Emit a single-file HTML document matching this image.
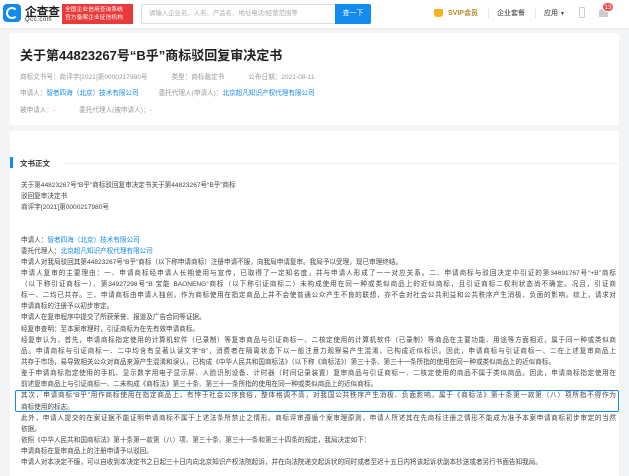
<!DOCTYPE html>
<html><head><meta charset="utf-8"><style>
*{margin:0;padding:0;box-sizing:border-box}
body{width:629px;height:470px;overflow:hidden;background:#f3f4f6;font-family:"Liberation Sans","Noto Sans CJK SC",sans-serif;position:relative;color:#333}
.hd{position:absolute;left:0;top:0;width:629px;height:28px;background:#fff;box-shadow:0 1px 3px rgba(0,0,0,.06)}
.abs{position:absolute}
.card{position:absolute;background:#fff;left:10px;width:609px}
.meta{position:absolute;left:20px;font-size:6.6px;color:#999;white-space:nowrap}
.blue{color:#128bed}
.body{position:absolute;left:21px;width:595px;font-size:6.6px;color:#444;line-height:11.15px}
.l{white-space:nowrap;overflow:hidden;height:11.15px}
.j{text-align:justify;text-align-last:justify;white-space:normal}
</style></head><body>
<div class="hd">
  <div class="abs" style="left:3px;top:4px;width:18px;height:18px;background:#128bed;border-radius:4px"></div>
  <div class="abs" style="left:6px;top:7px;width:12px;height:12px;border:2px solid #fff;border-radius:50%;border-right-color:transparent"></div>
  <div class="abs" style="left:25px;top:3px;font-size:12px;color:#222;font-weight:bold;letter-spacing:-0.5px">企查查</div>
  <div class="abs" style="left:25px;top:17px;font-size:6px;color:#333;letter-spacing:.5px">Qcc.com</div>
  <div class="abs" style="left:62px;top:4px;width:71px;height:20px;background:#e83a3a;color:#fff;font-size:5.8px;line-height:8.5px;padding:1.5px 3px;white-space:nowrap">全国企业信用查询系统<br>官方备案企业征信机构</div>
  <div class="abs" style="left:141px;top:4px;width:195px;height:20px;border:1px solid #ddd;border-radius:2px 0 0 2px;font-size:6.4px;color:#aaa;line-height:18px;padding-left:7px;white-space:nowrap;overflow:hidden">请输入企业名、人名、产品名、地址电话/经营范围等</div>
  <div class="abs" style="left:335px;top:4px;width:36px;height:20px;background:#128bed;color:#fff;font-size:7px;line-height:20px;text-align:center;border-radius:0 2px 2px 0">查一下</div>
  <div class="abs" style="left:434px;top:9px;width:9px;height:8px;background:#f5b324;border-radius:1px 1px 3px 3px"></div>
  <div class="abs" style="left:448px;top:8px;font-size:7px;color:#b8862c;font-weight:bold">SVIP会员</div>
  <div class="abs" style="left:488px;top:9px;width:1px;height:9px;background:#e5e5e5"></div>
  <div class="abs" style="left:497px;top:8px;font-size:7px;color:#333">企业套餐</div>
  <div class="abs" style="left:535px;top:9px;width:1px;height:9px;background:#e5e5e5"></div>
  <div class="abs" style="left:544px;top:8px;font-size:7px;color:#333">应用 <span style="font-size:5px">▼</span></div>
  <div class="abs" style="left:579px;top:7px;width:6px;height:11px;border:1px solid #ccc;border-radius:1.5px"></div>
  <div class="abs" style="left:599px;top:8px;width:9px;height:9px;background:#ccc;border-radius:5px 5px 1px 1px"></div>
  <div class="abs" style="left:602px;top:2px;width:12px;height:10px;background:#f04d4d;border-radius:5px;color:#fff;font-size:6.5px;line-height:10px;text-align:center;border:1px solid #fff">13</div>
</div>

<div class="card" style="top:33px;height:92px"></div>
<div class="abs" style="left:20px;top:45px;font-size:13px;font-weight:bold;color:#222;white-space:nowrap">关于第44823267号“B乎”商标驳回复审决定书</div>
<div class="meta" style="top:71px">商标文书号：商评字[2021]第0000217980号<span style="margin-left:24px">类型：商标裁定书</span><span style="margin-left:24px">公布日期：2021-08-11</span></div>
<div class="meta" style="top:87px">申请人：<span class="blue">智者四海（北京）技术有限公司</span><span style="margin-left:20px">委托代理人(申请人)：</span><span class="blue">北京超凡知识产权代理有限公司</span></div>
<div class="meta" style="top:104px">被申请人：-<span style="margin-left:24px">委托代理人(被申请人)：-</span></div>

<div class="card" style="top:131px;height:345px"></div>
<div class="abs" style="left:10px;top:157px;width:2.5px;height:11px;background:#128bed"></div>
<div class="abs" style="left:20px;top:158px;font-size:7.5px;font-weight:bold;color:#333">文书正文</div>
<div class="abs" style="left:63px;top:163px;width:555px;height:1px;background:#f0f0f0"></div>

<div class="body" style="top:180px">
<div class="l">关于第44823267号“B乎”商标驳回复审决定书关于第44823267号“B乎”商标</div>
<div class="l">驳回复审决定书</div>
<div class="l">商评字[2021]第0000217980号</div>
</div>

<div class="body" style="top:234.5px">
<div class="l">申请人：<span class="blue">智者四海（北京）技术有限公司</span></div>
<div class="l">委托代理人：<span class="blue">北京超凡知识产权代理有限公司</span></div>
<div class="l">申请人对我局驳回其第44823267号“B乎”商标（以下称申请商标）注册申请不服，向我局申请复审。我局予以受理，现已审理终结。</div>
<div class="l j">申请人复审的主要理由：一、申请商标经申请人长期使用与宣传，已取得了一定知名度，并与申请人形成了一一对应关系。二、申请商标与驳回决定中引证的第34691767号“+B”商标</div>
<div class="l j">（以下称引证商标一）、第34927298号“B 宝能 BAONENG”商标（以下称引证商标二）未构成使用在同一种或类似商品上的近似商标，且引证商标二权利状态尚不确定。况且，引证商</div>
<div class="l j">标一、二均已共存。三、申请商标由申请人独创，作为商标使用在指定商品上并不会使普通公众产生不良的联想，亦不会对社会公共利益和公共秩序产生消极、负面的影响。综上，请求对</div>
<div class="l">申请商标的注册予以初步审定。</div>
<div class="l">申请人在复审程序中提交了所获荣誉、报道及广告合同等证据。</div>
<div class="l">经复审查明：至本案审理时，引证商标为在先有效申请商标。</div>
<div class="l j">经复审认为，首先，申请商标指定使用的计算机软件（已录制）等复审商品与引证商标一、二核定使用的计算机软件（已录制）等商品在主要功能、用途等方面相近，属于同一种或类似商</div>
<div class="l j">品。申请商标与引证商标一、二中均含有显著认读文字“B”，消费者在隔离状态下以一般注意力观察易产生混淆，已构成近似标识。因此，申请商标与引证商标一、二在上述复审商品上</div>
<div class="l">共存于市场，易导致相关公众对商品来源产生混淆和误认，已构成《中华人民共和国商标法》（以下称《商标法》）第三十条、第三十一条所指的使用在同一种或类似商品上的近似商标。</div>
<div class="l j">鉴于申请商标指定使用的手机、显示数字用电子显示屏、人脸识别设备、计时器（时间记录装置）复审商品与引证商标一、二核定使用的商品不属于类似商品。因此，申请商标指定使用在</div>
<div class="l">前述复审商品上与引证商标一、二未构成《商标法》第三十条、第三十一条所指的使用在同一种或类似商品上的近似商标。</div>
<div class="l j">其次，申请商标“B乎”用作商标使用在指定商品上，有悖于社会公序良俗，整体格调不高，对我国公共秩序产生消极、负面影响，属于《商标法》第十条第一款第（八）项所指不得作为</div>
<div class="l">商标使用的标志。</div>
<div class="l j">此外，申请人提交的在案证据不能证明申请商标不属于上述法条所禁止之情形。商标评审遵循个案审理原则，申请人所述其在先商标注册之情形不能成为准予本案申请商标初步审定的当然</div>
<div class="l">依据。</div>
<div class="l">依照《中华人民共和国商标法》第十条第一款第（八）项、第三十条、第三十一条和第三十四条的规定，我局决定如下：</div>
<div class="l">申请商标在复审商品上的注册申请予以驳回。</div>
<div class="l">申请人对本决定不服，可以自收到本决定书之日起三十日内向北京知识产权法院起诉，并在向法院递交起诉状的同时或者至迟十五日内将该起诉状副本抄送或者另行书面告知我局。</div>
</div>
<div class="abs" style="left:15px;top:390px;width:604px;height:22px;border:1px solid #128bed;border-radius:2px"></div>
</body></html>
